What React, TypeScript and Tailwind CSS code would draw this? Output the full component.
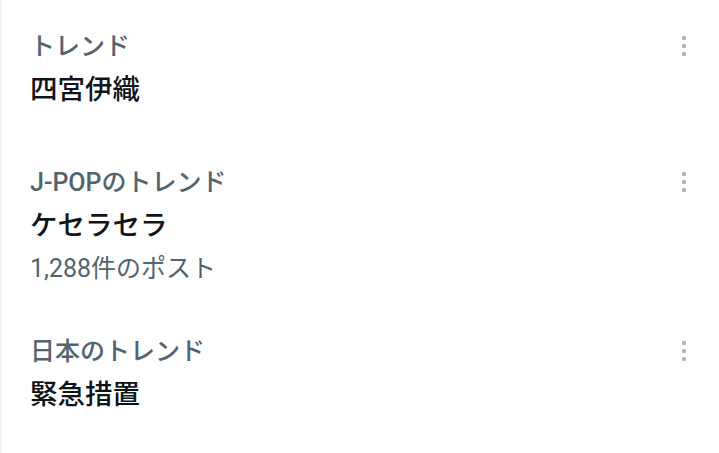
import React from 'react';

interface Trend {
  context: string;
  name: string;
  count?: string;
}

const trends: Trend[] = [
  { context: 'トレンド', name: '四宮伊織' },
  { context: 'J-POPのトレンド', name: 'ケセラセラ', count: '1,288件のポスト' },
  { context: '日本のトレンド', name: '緊急措置' },
];

const MoreIcon: React.FC = () => (
  <svg width="8" height="22" viewBox="0 0 8 22" className="block">
    <circle cx="4" cy="3" r="2.2" fill="#aeb7bf" />
    <circle cx="4" cy="11" r="2.2" fill="#aeb7bf" />
    <circle cx="4" cy="19" r="2.2" fill="#aeb7bf" />
  </svg>
);

const TrendItem: React.FC<{ trend: Trend }> = ({ trend }) => (
  <div className="flex items-start justify-between pl-[28px] pr-[31px] pt-[28px] pb-[29px]">
    <div className="flex flex-col">
      <div className="text-[25px] leading-[32px] font-medium text-[#536471]">{trend.context}</div>
      <div className="mt-[7px] text-[27.5px] leading-[40px] font-medium text-[#0f1419]">{trend.name}</div>
      {trend.count && (
        <div className="mt-[13px] text-[25px] leading-[20px] text-[#536471]">{trend.count}</div>
      )}
    </div>
    <div className="pt-[4px]">
      <MoreIcon />
    </div>
  </div>
);

export default function App() {
  return (
    <div
      className="w-[719px] h-[453px] overflow-hidden bg-white border-l-2 border-[#eff3f4]"
      style={{ fontFamily: 'Roboto, "Noto Sans CJK JP", "Noto Sans", sans-serif' }}
    >
      <div className="pt-[3px]">
        {trends.map((t) => (
          <TrendItem key={t.name} trend={t} />
        ))}
      </div>
    </div>
  );
}
